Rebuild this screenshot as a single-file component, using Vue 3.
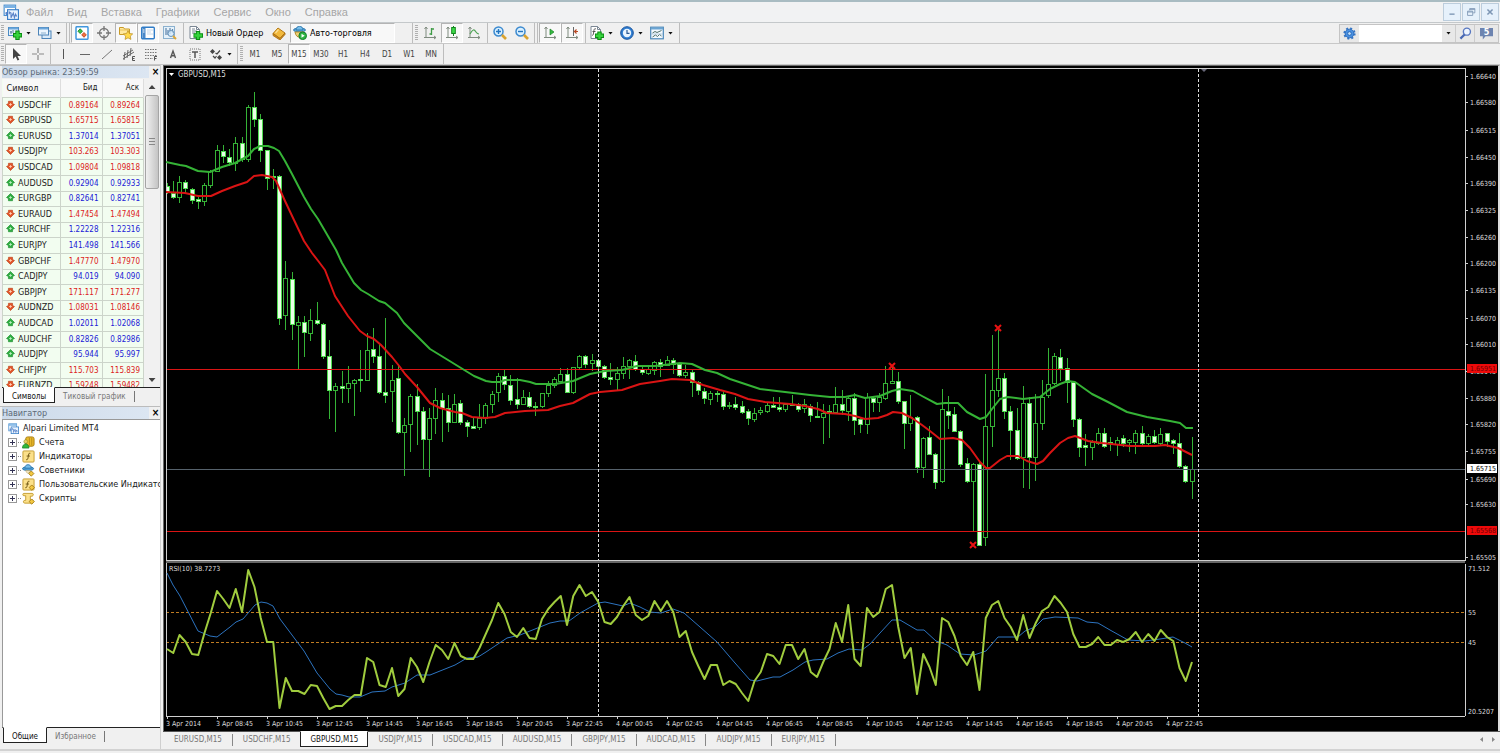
<script setup>
import { ref } from 'vue'

const menu = ['Файл', 'Вид', 'Вставка', 'Графики', 'Сервис', 'Окно', 'Справка']

// Icon bodies, drawn on a 14 x 14 grid
const icons = {
  app: '<rect x="1" y="1" width="10" height="9" fill="#fff" stroke="#4a90d0"/><path d="M1 2.500h10" stroke="#7ab2e4" stroke-width="2"/><rect x="4" y="5" width="9.500" height="8.500" fill="#eaf4ff" stroke="#3a7fc8"/><path d="M5.500 9v-2l1.500 1v4l2-4 1 4 1-3 1 2" fill="none" stroke="#5b83c8"/><path d="M3 7v3M2 8h2" stroke="#5b83c8"/>',
  newChart: '<rect x=".5" y="1.500" width="10" height="8" fill="#e6f1fb" stroke="#4d8cc4"/><path d="M1 2.500h9" stroke="#6aa7dc" stroke-width="2"/><path d="M3 5v3M2 6h2M5 4v3" stroke="#5a7fa0"/><path d="M9.500 4.500v9.500M5 9.200h9" stroke="#0a8a12" stroke-width="4.400"/><path d="M9.500 5.500v7.500M6 9.200h7.200" stroke="#35d33c" stroke-width="2.400"/>',
  profiles: '<rect x="4" y="5" width="9" height="7.500" fill="#d8e9f8" stroke="#4d84b8"/><rect x=".5" y="1.500" width="10" height="7.500" fill="#eaf4fd" stroke="#4d84b8"/><path d="M1 2.500h9" stroke="#6aa7dc" stroke-width="2"/><path d="M3 7h5" stroke="#8ab0cf"/>',
  market: '<rect x="1" y=".7" width="12" height="12.600" rx="1" fill="#fff" stroke="#3f96de" stroke-width="1.500"/><path d="M5.200 2.800l2.300 2.400-2.300 2.400-2.300-2.400z" fill="#3cc24c" stroke="#0a7b1a" stroke-width=".8"/><path d="M9 6.500l2.300 2.400-2.300 2.400-2.300-2.400z" fill="#f0703c" stroke="#b8330d" stroke-width=".8"/>',
  cross: '<circle cx="7" cy="7" r="4.500" fill="none" stroke="#777" stroke-width="1.300"/><path d="M7 0v5M7 9v5M0 7h5M9 7h5" stroke="#777" stroke-width="1.300"/>',
  navigator: '<path d="M.5 8.500v-7h4l1 1.500h5v5.500z" fill="#ffe9a0" stroke="#c89a26"/><path d="M1 4h9" stroke="#e8c35a"/><path d="M9 4.500l1.400 3 3.300.400-2.400 2.200.6 3.300-2.900-1.600-2.900 1.600.6-3.300-2.400-2.200 3.300-.400z" fill="#ffd94a" stroke="#c2952a" stroke-width=".8"/>',
  terminal: '<rect x=".7" y="1.200" width="12.600" height="11.600" rx="1" fill="#fff" stroke="#2f7cc8" stroke-width="1.400"/><rect x="1.500" y="2" width="3" height="10" fill="#4a88c8"/><path d="M6 4h6M6 6h4M6 8h6" stroke="#c6d8ea"/><path d="M2 4h1.500M2 6h1.500" stroke="#fff"/>',
  tester: '<rect x=".5" y=".5" width="11" height="12" fill="#e5f1fa" stroke="#8bb1cf"/><path d="M3 2v7M5 4v5M7 2v6M9.500 3v4" stroke="#5d84ab" stroke-width="1.200"/><circle cx="8" cy="7.500" r="3" fill="#d6ebfb" fill-opacity=".8" stroke="#6794bb"/><path d="M10 10l3 3" stroke="#dca737" stroke-width="2"/>',
  order: '<path d="M1 .5h6.500l3 3v9h-9.500z" fill="#fff" stroke="#7b8794"/><path d="M7.500.5v3h3M3 3h3M3 5h5M3 7h3" stroke="#7b8794" fill="none"/><path d="M9 5v9M4.500 9.500h9.500" stroke="#0a8a12" stroke-width="4.400"/><path d="M9 6v7M5.300 9.500h7.800" stroke="#35d33c" stroke-width="2.400"/>',
  book: '<path d="M1 7.500l5-5.500 7 5-5 5.500z" fill="#f2b93c" stroke="#b57a14"/><path d="M1 7.500v2l7 4.500 5-5.500v-1.500l-5 5.500z" fill="#d18d1c" stroke="#a66c10" stroke-width=".8"/><path d="M3.500 7l3-3.500" stroke="#ffe194" stroke-width="1.200"/>',
  expert: '<ellipse cx="6.500" cy="4" rx="6" ry="2" fill="#5ba9dc" stroke="#2d78ae"/><path d="M3 4c0-5 7-5 7 0z" fill="#76bdea" stroke="#2d78ae"/><path d="M2 6c1 7 8 7 9 0z" fill="#ecd27a" stroke="#b58c2a"/><circle cx="9.700" cy="9.800" r="3.800" fill="#2eb443" stroke="#15802a"/><path d="M8.500 7.800l3.200 2-3.200 2z" fill="#fff"/>',
  bars: '<path d="M3 1v11M1 11.500h12M3 1l-1.500 2M3 1l1.500 2M13 11.500l-2-1.500M13 11.500l-2 1.500" stroke="#7f8b7f" fill="none"/><path d="M8.500 2v7M8.500 3h2.500M6.500 8h2" stroke="#3f9b46" stroke-width="1.300"/>',
  candle: '<path d="M3 1v11M1 11.500h12M3 1l-1.500 2M3 1l1.500 2M13 11.500l-2-1.500M13 11.500l-2 1.500" stroke="#7f8b7f" fill="none"/><path d="M8.500 0v10" stroke="#14861e"/><rect x="6.700" y="1.500" width="3.600" height="6" fill="#3ddb48" stroke="#14861e"/>',
  line: '<path d="M3 1v11M1 11.500h12M3 1l-1.500 2M3 1l1.500 2M13 11.500l-2-1.500M13 11.500l-2 1.500" stroke="#7f8b7f" fill="none"/><path d="M3 8c3-5 4-5 6-2 1 1.500 2 2 3 2" fill="none" stroke="#4fa456" stroke-width="1.200"/>',
  zoomIn: '<circle cx="5.500" cy="5.500" r="4.500" fill="#d9f0ff" stroke="#3b89cf" stroke-width="1.500"/><path d="M3 5.500h5M5.500 3v5" stroke="#2375c0" stroke-width="1.400"/><path d="M9 9l4 4" stroke="#d9a32f" stroke-width="2.600"/>',
  zoomOut: '<circle cx="5.500" cy="5.500" r="4.500" fill="#d9f0ff" stroke="#3b89cf" stroke-width="1.500"/><path d="M3 5.500h5" stroke="#2375c0" stroke-width="1.400"/><path d="M9 9l4 4" stroke="#d9a32f" stroke-width="2.600"/>',
  scroll: '<path d="M3 1v11M1 11.500h12M3 1l-1.500 2M3 1l1.500 2M13 11.500l-2-1.500M13 11.500l-2 1.500" stroke="#7f8b7f" fill="none"/><path d="M7 3l4 3-4 3z" fill="#35bb40" stroke="#1b8226" stroke-width=".7"/>',
  shift: '<path d="M3 1v11M1 11.500h12M3 1l-1.500 2M3 1l1.500 2M13 11.500l-2-1.500M13 11.500l-2 1.500" stroke="#7f8b7f" fill="none"/><path d="M8.500 1v9" stroke="#666"/><path d="M13 5.500h-3M11.500 3.500l-2 2 2 2" fill="none" stroke="#bb4a24" stroke-width="1.200"/>',
  indicator: '<path d="M1 .5h6.500l3 3v9h-9.500z" fill="#fff" stroke="#7b8794"/><path d="M7.500.5v3h3" stroke="#7b8794" fill="none"/><path d="M6 3c-2-1-2 1-2.300 3s-.5 4-1.700 3M2.500 5.500h3" fill="none" stroke="#555"/><path d="M9.500 5.500v8.500M5 9.800h9" stroke="#0a8a12" stroke-width="4.400"/><path d="M9.500 6.500v6.500M5.800 9.800h7.400" stroke="#35d33c" stroke-width="2.400"/>',
  clock: '<circle cx="7" cy="7" r="6.300" fill="#2f7dd1" stroke="#1b559d"/><circle cx="7" cy="7" r="4.200" fill="#eaf5ff"/><path d="M7 4v3.300h2.500" fill="none" stroke="#2a5a94" stroke-width="1.200"/>',
  template: '<rect x=".7" y="1.200" width="12.600" height="11.600" fill="#f4faff" stroke="#4a87b8" stroke-width="1.200"/><path d="M1 2.500h12" stroke="#6ba5d3" stroke-width="2"/><path d="M2.500 7l2.500-1.500 2 1 4.500-2M2.500 11l3-2 2 1.500 2-2 2 1.500" fill="none" stroke="#4f6f68"/><path d="M1 8h12" stroke="#9dbad0" stroke-width=".7"/>',
  cursor: '<path d="M4 1v11l2.700-2.500 1.800 4 1.800-.8-1.800-3.800h3.500z" fill="#444"/>',
  crosshair: '<path d="M7 1v5M7 8v5M1 7h5M8 7h5" stroke="#888" stroke-width="1.200"/>',
  vline: '<path d="M7.500 2v10" stroke="#555"/>',
  hline: '<path d="M2 7.500h10" stroke="#666"/>',
  trend: '<path d="M2 12L12 3" stroke="#777"/>',
  channel: '<path d="M1 9l10-6M1 12l11-7M3 5l-1 8M6 3l-1 8M9 1l-1 8" stroke="#666"/><path d="M13 9.500h-2.500v4h2.500M10.500 11.500h2" stroke="#555" fill="none"/>',
  fibo: '<path d="M1 2.500h12M1 5.500h12M1 8.500h12M1 11.500h8" stroke="#777" stroke-dasharray="1.500 1"/><path d="M13 9.500h-2.500v4M10.500 11.500h2" stroke="#555" fill="none"/>',
  letter: '<path d="M4.500 11l2.500-7 2.500 7M5.300 8.800h3.400" fill="none" stroke="#555" stroke-width="1.400"/>',
  label: '<rect x="2" y="2" width="10" height="11" fill="none" stroke="#777" stroke-dasharray="1 1"/><path d="M4 5h6M7 5v6" stroke="#555" stroke-width="1.500"/>',
  arrows: '<path d="M3.500 2l2.500 2.500-2.500 2.500-2.500-2.500z" fill="#444"/><path d="M10.500 8l2.500 2.500-2.500 2.500-2.500-2.500z" fill="#444"/><path d="M4 9l2 2 1.500-2M6.500 6l1.500 1 3-3.500" fill="none" stroke="#444" stroke-width="1.200"/>',
  gear: '<circle cx="7" cy="7" r="4.700" fill="#4b91e2" stroke="#2264b4"/><circle cx="7" cy="7" r="5.600" fill="none" stroke="#3474c4" stroke-width="2" stroke-dasharray="2.200 2.200"/><circle cx="7" cy="7" r="2" fill="#c5e0fb" stroke="#2264b4"/>',
  search: '<circle cx="8.500" cy="5" r="3.800" fill="#eef5ff" stroke="#5877c0" stroke-width="1.500"/><path d="M6 8l-4.500 4.500" stroke="#4a69b4" stroke-width="2.400"/>',
  chat: '<path d="M0 1h14v9h-8l-3 3.500v-3.500h-3z" fill="#6d84b0"/>',
  min: '<path d="M4 9.500h6" stroke="#7d96b4" stroke-width="1.600"/>',
  restore: '<path d="M5.500 5v-2h6v5h-2M3 6h6v5h-6zM3 7h6M5.500 4h6" fill="none" stroke="#7d96b4"/>',
  close: '<path d="M4 4l6 6M10 4l-6 6" stroke="#7d96b4" stroke-width="1.800"/>',
  accounts: '<rect x="4" y="1" width="9" height="10" rx="2" fill="#e9b92b" stroke="#a67a10"/><path d="M8 2v8M10.500 2v8" stroke="#b88b18"/><circle cx="4" cy="6" r="2" fill="#e8cf6a" stroke="#8c8b22" stroke-width=".6"/><path d="M.5 13c0-6 7-6 7 0z" fill="#31b83c" stroke="#178224" stroke-width=".8"/>',
  func: '<rect x="1" y="1" width="12" height="12" rx="1" fill="#fbe08a" stroke="#c39a2e"/><path d="M9 3.500c-2-.7-1.800 1.500-2.200 3.500s-.500 4-2.300 3.500M5 6.500h3.500" fill="none" stroke="#6b5210"/>',
  advisor: '<ellipse cx="6.500" cy="5" rx="6" ry="2" fill="#4f9fd6" stroke="#2d78ae"/><path d="M3 4.500c0-5 7-5 7 0z" fill="#76bdea" stroke="#2d78ae"/><path d="M4 7c1 4 4 4 5 0z" fill="#efe3bf" stroke="#b9a468" stroke-width=".6"/><path d="M10 7.500l2.800 2.800-2.800 2.800-2.800-2.800z" fill="#f3c840" stroke="#a67d16"/>',
  custom: '<rect x="1" y="1" width="12" height="12" rx="1" fill="#fbe08a" stroke="#c39a2e"/><path d="M8 3.500c-2-.7-1.800 1.500-2.200 3.500s-.500 4-2.300 3.500M4 6.500h3.500" fill="none" stroke="#6b5210"/><path d="M10.500 7.500l2.800 2.800-2.800 2.800-2.800-2.800z" fill="#f3c840" stroke="#a67d16"/>',
  script: '<path d="M2 1.500h9c2 0 1 3 0 3h-2v5h2v2.500h-8c-2 0-2-3 0-3h1v-5h-2c-1.500 0-1.500-2.500 0-2.500z" fill="#fbe08a" stroke="#c39a2e"/><path d="M10.500 7.500l2.800 2.800-2.800 2.800-2.800-2.800z" fill="#f3c840" stroke="#a67d16"/>',
  up: '<path d="M7 .8l6.200 6.200-3 1.500v3.500h-6.400v-3.500l-3-1.500z" fill="#2fae42" stroke="#1c8a2e"/><path d="M7 5v4M5 7h4" stroke="#b9ecc0" stroke-width="1.600"/>',
  down: '<path d="M7 13.200l6.200-6.200-3-1.500v-3.500h-6.400v3.500l-3 1.500z" fill="#e2562b" stroke="#bb4018"/><path d="M7 5v4M5 7h4" stroke="#ffd0b4" stroke-width="1.600"/>'
}

const groupA = [
  { icon: 'market', label: 'Обзор рынка', on: true },
  { icon: 'cross', label: 'Окно данных' },
  { icon: 'navigator', label: 'Навигатор', on: true },
  { icon: 'terminal', label: 'Терминал', on: true },
  { icon: 'tester', label: 'Тестер стратегий' }
]
const chartTypes = [
  { icon: 'bars', label: 'Бары' },
  { icon: 'candle', label: 'Свечи', on: true },
  { icon: 'line', label: 'Линия' }
]
const lineTools = ['vline', 'hline', 'trend', 'channel', 'fibo', 'letter', 'label']
const frames = ['M1', 'M5', 'M15', 'M30', 'H1', 'H4', 'D1', 'W1', 'MN']
const query = ref('')

const quotes = [
  ['USDCHF', '0.89164', '0.89264', 0], ['GBPUSD', '1.65715', '1.65815', 0],
  ['EURUSD', '1.37014', '1.37051', 1], ['USDJPY', '103.263', '103.303', 0],
  ['USDCAD', '1.09804', '1.09818', 0], ['AUDUSD', '0.92904', '0.92933', 1],
  ['EURGBP', '0.82641', '0.82741', 1], ['EURAUD', '1.47454', '1.47494', 0],
  ['EURCHF', '1.22228', '1.22316', 1], ['EURJPY', '141.498', '141.566', 1],
  ['GBPCHF', '1.47770', '1.47970', 0], ['CADJPY', '94.019', '94.090', 1],
  ['GBPJPY', '171.117', '171.277', 0], ['AUDNZD', '1.08031', '1.08146', 0],
  ['AUDCAD', '1.02011', '1.02068', 1], ['AUDCHF', '0.82826', '0.82986', 1],
  ['AUDJPY', '95.944', '95.997', 1], ['CHFJPY', '115.703', '115.839', 0],
  ['EURNZD', '1.59248', '1.59482', 0]
]

const tree = [
  ['accounts', 'Счета'], ['func', 'Индикаторы'], ['advisor', 'Советники'],
  ['custom', 'Пользовательские Индикато'], ['script', 'Скрипты']
]

const tabs = ['EURUSD,M15', 'USDCHF,M15', 'GBPUSD,M15', 'USDJPY,M15', 'USDCAD,M15', 'AUDUSD,M15', 'GBPJPY,M15', 'AUDCAD,M15', 'AUDJPY,M15', 'EURJPY,M15']

// One bar every 6.25 units: high, body top, body bottom, low, hollow flag
const STEP = 6.25
const ohlc = `183 186 192 193 0|181 193 197 198 0|176 182 197 202 1|180 182 188 193 0|188 189 200 203 0|197 199 201 208 0|183 185 201 205 1|170 171 185 187 1|145 150 171 171 1|145 151 156 162 0|149 157 162 165 0|137 143 163 170 1|137 143 159 161 0|105 107 159 161 1|92 107 119 126 0|114 119 150 161 0|150 150 178 189 0|169 176 177 188 0|175 176 318 324 0|261 278 315 329 1|272 279 324 339 0|316 322 325 369 1|316 322 332 356 0|309 320 333 340 1|302 320 323 324 0|323 324 356 358 0|340 356 390 418 0|383 386 390 431 1|371 386 388 402 0|366 383 388 402 1|379 380 383 415 1|350 379 380 391 0|333 350 380 380 1|328 349 356 362 0|343 356 392 393 0|318 392 395 402 0|365 380 391 421 1|364 378 432 433 0|418 425 432 475 1|394 396 424 451 1|384 396 411 444 0|407 411 439 468 0|408 418 439 476 1|388 400 418 433 1|393 400 408 441 0|395 408 422 431 0|394 404 422 422 1|400 403 422 424 0|420 422 426 436 0|417 426 428 428 0|404 418 427 429 1|403 405 418 423 1|391 394 404 412 1|373 376 392 401 1|370 376 384 389 0|375 385 400 404 0|378 399 404 408 0|390 397 404 404 1|392 397 406 407 0|402 406 407 415 0|393 393 406 407 1|381 385 393 396 1|377 379 385 387 1|368 374 381 381 1|368 374 392 392 0|367 367 392 393 1|355 356 367 368 1|355 356 364 367 0|354 360 363 370 1|359 360 366 373 0|365 366 377 378 0|363 377 379 384 0|367 373 379 390 1|357 366 373 378 1|359 360 366 378 1|355 361 369 370 0|367 369 372 374 0|367 369 373 374 1|361 362 370 374 1|359 362 366 376 0|356 360 365 365 1|358 360 364 373 0|363 364 375 376 0|365 372 375 377 1|369 372 382 396 0|381 382 390 394 0|388 391 398 403 0|391 393 399 404 1|391 393 394 401 0|392 394 406 409 0|402 405 406 408 1|397 404 407 409 0|401 406 412 413 0|409 411 418 424 0|408 413 419 421 1|407 410 412 414 1|402 405 411 412 1|397 405 407 407 0|397 407 409 411 0|403 404 409 411 1|395 404 405 405 0|403 404 409 411 0|399 404 408 412 1|404 406 415 421 0|402 416 417 417 0|404 413 417 443 1|405 411 412 437 0|387 404 412 413 1|390 404 410 414 0|396 398 411 420 1|393 398 420 434 0|417 419 424 432 0|393 397 424 433 1|397 398 402 411 0|393 397 402 411 1|366 383 398 399 1|367 381 383 383 1|372 381 401 403 0|401 401 423 448 0|395 417 423 430 1|416 417 467 472 0|437 438 467 477 1|426 437 454 454 0|453 454 482 488 0|389 409 481 482 1|396 411 415 428 0|407 414 431 431 0|430 431 464 466 0|458 463 481 482 0|463 464 481 530 1|462 464 545 545 0|374 426 537 545 1|335 390 426 446 1|330 378 390 396 1|373 378 411 418 0|406 411 430 459 0|408 430 458 459 0|386 403 457 487 1|397 403 457 488 0|394 423 457 480 1|380 397 423 429 1|348 384 395 397 1|353 356 383 384 1|349 357 368 380 0|358 368 382 402 0|381 382 419 426 0|418 419 447 456 0|434 445 447 465 0|440 442 447 459 1|428 433 443 444 1|428 433 446 447 0|437 442 443 450 0|437 440 444 455 1|435 438 443 446 0|439 440 442 451 1|430 433 442 453 1|426 433 443 444 0|434 436 443 444 1|430 436 442 443 0|428 434 443 444 1|433 433 441 446 0|439 440 443 453 0|433 443 466 467 0|465 466 481 482 0|437 469 481 498 1`
const barX = i => Math.floor(167 + i * STEP)
const candles = ohlc.split('|').map((row, i) => {
  const [high, top, bottom, low, hollow] = row.split(' ').map(Number)
  return { x: barX(i), high, top, bottom, low, hollow, h: Math.max(bottom - top, 1) }
})

const rsi = [649, 653, 635, 642, 654, 655, 633, 613, 591, 599, 608, 589, 612, 570, 587, 618, 642, 642, 708, 678, 691, 691, 694, 685, 686, 698, 709, 706, 706, 700, 695, 695, 658, 662, 685, 687, 668, 696, 689, 658, 667, 682, 662, 645, 650, 659, 643, 656, 659, 659, 648, 634, 620, 603, 614, 632, 637, 628, 638, 639, 619, 609, 602, 596, 625, 596, 585, 596, 592, 602, 622, 624, 617, 606, 597, 615, 620, 616, 601, 611, 601, 612, 637, 631, 652, 666, 679, 665, 665, 685, 681, 684, 693, 701, 681, 672, 654, 656, 664, 645, 645, 659, 649, 672, 677, 662, 649, 623, 642, 605, 659, 666, 608, 617, 612, 589, 585, 627, 658, 648, 694, 654, 667, 685, 618, 622, 636, 656, 665, 652, 690, 618, 605, 601, 618, 627, 640, 615, 638, 623, 611, 607, 596, 603, 612, 634, 647, 647, 644, 637, 645, 645, 640, 642, 639, 632, 642, 634, 641, 630, 637, 641, 668, 681, 662]
const rsiPoints = rsi.map((y, i) => `${167 + i * STEP},${y}`).join(' ')
const rsiAverage = '167,573 173,585 180,596 198,631 210,636 217,637 230,627 236,622 243,619 255,605 261,602 267,603 273,606 280,619 304,651 317,673 330,689 336,694 342,695 349,697 360,697 372,692 385,691 392,687 405,683 417,675 430,675 445,669 455,665 467,658 478,657 486,652 507,638 520,635 535,629 550,623 560,621 569,621 580,613 598,603 605,602 623,606 630,603 640,607 650,612 661,613 667,611 673,609 684,613 700,627 717,642 735,663 750,680 757,681 773,677 780,677 793,670 805,662 813,660 827,659 838,653 849,649 862,650 870,644 880,633 892,620 900,620 917,630 924,630 936,641 947,645 960,654 974,655 986,651 998,637 1018,637 1025,631 1035,627 1043,619 1055,617 1078,618 1087,622 1098,623 1110,630 1128,640 1145,641 1160,639 1173,637 1185,643 1192,647'
const slow = '166,162 180,165 186,166 198,171 210,172 222,167 235,163 248,156 254,149 260,146 268,146 274,148 279,151 285,161 292,174 304,197 311,209 318,219 325,231 336,250 342,263 354,283 361,290 368,294 379,301 385,303 397,313 404,323 418,337 430,349 448,360 461,368 474,376 486,381 492,382 500,382 505,380 520,380 530,382 536,384 555,384 573,381 590,374 605,371 622,370 637,366 655,366 672,364 680,363 692,364 705,370 717,373 730,379 745,384 760,389 785,392 810,395 830,397 845,397 855,395 865,398 880,396 892,391 900,389 913,391 922,396 937,404 945,403 958,403 967,412 980,419 986,417 992,409 1000,399 1008,397 1023,399 1040,397 1050,389 1060,384 1068,381 1075,382 1092,394 1108,402 1127,412 1147,417 1170,421 1180,423 1186,428 1193,428'
const fast = '166,192 185,193 198,196 211,196 222,191 235,186 247,182 254,176 262,175 272,177 276,181 285,201 294,220 304,241 312,253 319,262 325,270 335,296 348,316 360,331 367,336 374,339 381,345 392,357 400,367 405,374 417,387 430,403 440,408 455,412 462,413 472,417 485,418 495,417 505,413 525,411 548,410 560,406 573,403 590,394 600,392 622,390 640,384 660,381 672,379 690,380 703,385 720,390 735,394 748,399 765,402 790,404 805,406 818,409 827,413 845,414 855,416 865,419 878,418 887,415 893,412 902,413 912,418 922,425 930,431 940,439 953,438 962,440 970,448 980,462 986,468 990,468 1000,460 1007,456 1018,456 1027,461 1037,464 1043,461 1050,453 1060,443 1068,438 1075,436 1088,441 1102,443 1130,446 1155,446 1165,445 1178,448 1192,455'
const crosses = [[892, 366], [998, 328], [973, 545]]

const times = ['3 Apr 2014', '3 Apr 08:45', '3 Apr 10:45', '3 Apr 12:45', '3 Apr 14:45', '3 Apr 16:45', '3 Apr 18:45', '3 Apr 20:45', '3 Apr 22:45', '4 Apr 00:45', '4 Apr 02:45', '4 Apr 04:45', '4 Apr 06:45', '4 Apr 08:45', '4 Apr 10:45', '4 Apr 12:45', '4 Apr 14:45', '4 Apr 16:45', '4 Apr 18:45', '4 Apr 20:45', '4 Apr 22:45']
const prices = [['1.66640', 76], ['1.66580', 102], ['1.66515', 130], ['1.66450', 157], ['1.66390', 183], ['1.66325', 210], ['1.66260', 237], ['1.66200', 263], ['1.66135', 290], ['1.66070', 318], ['1.66010', 344], ['1.65945', 371], ['1.65880', 398], ['1.65820', 424], ['1.65755', 451], ['1.65690', 479], ['1.65630', 504], ['1.65505', 557]]
const marks = [['1.65951', 369, 'alert'], ['1.65715', 469, 'bid'], ['1.65568', 531, 'alert']]
const levels = [['71.512', 568], ['55', 612], ['45', 642], ['20.5207', 711]]
</script>

<template>
  <div class="terminal">
    <header class="menubar">
      <svg class="logo" viewBox="0 0 14 14" v-html="icons.app"></svg>
      <nav class="menu">
        <button v-for="m in menu" :key="m" type="button">{{ m }}</button>
      </nav>
      <div class="winctl">
        <button v-for="w in ['min', 'restore', 'close']" :key="w" type="button" :aria-label="w">
          <svg viewBox="0 0 14 14" v-html="icons[w]"></svg>
        </button>
      </div>
    </header>

    <div class="toolbar">
      <i class="grip"></i>
      <button type="button" class="tool drop" aria-label="Новый график"><svg viewBox="0 0 14 14" v-html="icons.newChart"></svg><i class="caret"></i></button>
      <button type="button" class="tool drop" aria-label="Профили"><svg viewBox="0 0 14 14" v-html="icons.profiles"></svg><i class="caret"></i></button>
      <i class="sep double"></i>
      <button v-for="t in groupA" :key="t.icon" type="button" class="tool" :class="{ on: t.on }" :aria-label="t.label"><svg viewBox="0 0 14 14" v-html="icons[t.icon]"></svg></button>
      <i class="sep"></i>
      <button type="button" class="tool wide order"><svg viewBox="0 0 14 14" v-html="icons.order"></svg>Новый Ордер</button>
      <button type="button" class="tool" aria-label="Редактор"><svg viewBox="0 0 14 14" v-html="icons.book"></svg></button>
      <button type="button" class="tool wide auto on"><svg viewBox="0 0 14 14" v-html="icons.expert"></svg>Авто-торговля</button>
      <i class="sep far"></i>
      <i class="grip"></i>
      <button v-for="t in chartTypes" :key="t.icon" type="button" class="tool" :class="{ on: t.on }" :aria-label="t.label"><svg viewBox="0 0 14 14" v-html="icons[t.icon]"></svg></button>
      <i class="sep"></i>
      <button type="button" class="tool" aria-label="Увеличить"><svg viewBox="0 0 14 14" v-html="icons.zoomIn"></svg></button>
      <button type="button" class="tool" aria-label="Уменьшить"><svg viewBox="0 0 14 14" v-html="icons.zoomOut"></svg></button>
      <i class="sep double"></i>
      <button type="button" class="tool on" aria-label="Автопрокрутка"><svg viewBox="0 0 14 14" v-html="icons.scroll"></svg></button>
      <button type="button" class="tool on" aria-label="Сдвиг графика"><svg viewBox="0 0 14 14" v-html="icons.shift"></svg></button>
      <i class="sep"></i>
      <button v-for="d in ['indicator', 'clock', 'template']" :key="d" type="button" class="tool drop" :aria-label="d"><svg viewBox="0 0 14 14" v-html="icons[d]"></svg><i class="caret"></i></button>
      <i class="sep"></i>
      <div class="finder">
        <button type="button" aria-label="Настройки"><svg viewBox="0 0 14 14" v-html="icons.gear"></svg></button>
        <input v-model="query" type="text" aria-label="Поиск">
        <button type="button" class="narrow" aria-label="История поиска"><i class="caret"></i></button>
        <button type="button" aria-label="Найти"><svg viewBox="0 0 14 14" v-html="icons.search"></svg></button>
        <button type="button" class="chat" aria-label="Сообщения"><svg viewBox="0 0 14 14" v-html="icons.chat"></svg><b>5</b></button>
      </div>
    </div>

    <div class="toolbar second">
      <i class="grip"></i>
      <button type="button" class="tool on" aria-label="Курсор"><svg viewBox="0 0 14 14" v-html="icons.cursor"></svg></button>
      <button type="button" class="tool" aria-label="Перекрестие"><svg viewBox="0 0 14 14" v-html="icons.crosshair"></svg></button>
      <i class="sep"></i>
      <button v-for="t in lineTools" :key="t" type="button" class="tool" :aria-label="t"><svg viewBox="0 0 14 14" v-html="icons[t]"></svg></button>
      <button type="button" class="tool drop" aria-label="Стрелки"><svg viewBox="0 0 14 14" v-html="icons.arrows"></svg><i class="caret"></i></button>
      <i class="sep"></i>
      <i class="grip"></i>
      <button v-for="f in frames" :key="f" type="button" class="tool frame" :class="{ on: f === 'M15' }">{{ f }}</button>
      <i class="sep"></i>
    </div>

    <div class="workspace">
      <aside class="side">
        <section class="panel watch">
          <h2>Обзор рынка: 23:59:59<button type="button" aria-label="Закрыть">×</button></h2>
          <div class="list">
            <table>
              <thead><tr><th>Символ</th><th>Бид</th><th>Аск</th></tr></thead>
              <tbody>
                <tr v-for="q in quotes" :key="q[0]" :class="q[3] ? 'rise' : 'fall'">
                  <td><svg viewBox="0 0 14 14" v-html="q[3] ? icons.up : icons.down"></svg>{{ q[0] }}</td>
                  <td>{{ q[1] }}</td>
                  <td>{{ q[2] }}</td>
                </tr>
              </tbody>
            </table>
            <div class="scroll">
              <i class="tri up"></i>
              <i class="thumb"></i>
              <i class="tri down"></i>
            </div>
          </div>
          <div class="tabrow"><button type="button" class="active">Символы</button><button type="button">Тиковый график</button></div>
        </section>

        <section class="panel nav">
          <h2>Навигатор<button type="button" aria-label="Закрыть">×</button></h2>
          <ul class="tree">
            <li class="root"><svg viewBox="0 0 14 14" v-html="icons.app"></svg>Alpari Limited MT4</li>
            <li v-for="n in tree" :key="n[0]"><i class="plus"></i><svg viewBox="0 0 14 14" v-html="icons[n[0]]"></svg>{{ n[1] }}</li>
          </ul>
          <div class="tabrow"><button type="button" class="active">Общие</button><button type="button">Избранное</button></div>
        </section>
      </aside>

      <main class="main">
        <div class="chart">
          <svg class="plot" height="664">
            <g transform="translate(-166 -67)" shape-rendering="crispEdges">
              <g class="candles">
                <template v-for="c in candles" :key="c.x">
                  <rect class="wick" :x="c.x" :y="c.high" width="1" :height="c.low - c.high + 1" />
                  <rect :class="c.hollow ? 'hollow' : 'solid'" :x="c.x - 1.5" :y="c.top + 0.5" width="4" :height="c.h" />
                </template>
              </g>
            </g>
            <g shape-rendering="crispEdges">
              <rect class="limit" x="0" y="302" width="100%" height="1" />
              <rect class="limit" x="0" y="464" width="100%" height="1" />
              <line class="bidline" x1="0" x2="100%" y1="402.5" y2="402.5" />
              <line class="level" x1="0" x2="100%" y1="545.5" y2="545.5" />
              <line class="level" x1="0" x2="100%" y1="575.5" y2="575.5" />
              <line class="day" x1="432.5" x2="432.5" y1="2" y2="649" />
              <line class="day" x1="1032.5" x2="1032.5" y1="2" y2="649" />
              <line class="edge" x1="0" x2="100%" y1="1" y2="1" />
              <line class="edge" x1="0.5" x2="0.5" y1="1" y2="649" />
              <line class="edge" x1="0" x2="100%" y1="493.5" y2="493.5" />
              <line class="split" x1="0" x2="100%" y1="495" y2="495" />
              <line class="edge" x1="0" x2="100%" y1="649.5" y2="649.5" />
              <line v-for="(t, i) in times" :key="t" class="edge" :x1="1.5 + i * 50" :x2="1.5 + i * 50" y1="650" y2="652" />
            </g>
            <g transform="translate(-166 -67)">
              <polyline class="slow" :points="slow" />
              <polyline class="fast" :points="fast" />
              <path v-for="c in crosses" :key="c[0]" class="cross" :d="`M${c[0] - 3} ${c[1] - 3}l6 6m0-6l-6 6`" />
              <polyline class="average" :points="rsiAverage" />
              <polyline class="rsi" :points="rsiPoints" />
            </g>
            <path class="white" d="M3 6h5l-2.500 3z" />
            <path class="shiftmark" d="M1035 2h6l-3 3z" />
            <text x="12" y="10" class="title">GBPUSD,M15</text>
            <text x="3" y="504">RSI(10) 38.7273</text>
            <text v-for="(t, i) in times" :key="t" :x="i * 50" y="659">{{ t }}</text>
          </svg>
          <svg class="axis" height="664">
            <g transform="translate(0 -67)">
              <path class="edge" d="M.5 68v493M.5 564v152" />
              <g v-for="p in prices" :key="p[0]">
                <path class="edge" :d="`M0 ${p[1] + 0.5}h3`" />
                <text x="5" :y="p[1] + 3">{{ p[0] }}</text>
              </g>
              <text v-for="l in levels" :key="l[0]" x="3" :y="l[1] + 3">{{ l[0] }}</text>
              <g v-for="m in marks" :key="m[0]" :class="m[2]">
                <rect x="2" :y="m[1] - 5" width="30" height="9" />
                <text x="5" :y="m[1] + 2">{{ m[0] }}</text>
              </g>
            </g>
          </svg>
        </div>
        <div class="charttabs">
          <button v-for="t in tabs" :key="t" type="button" :class="{ active: t === 'GBPUSD,M15' }">{{ t }}</button>
          <span class="pager"><i class="left"></i><i class="right"></i></span>
        </div>
      </main>
    </div>
    <footer class="status"></footer>
  </div>
</template>

<style>
body {
  background: #f0f0f0;
}
</style>

<style scoped>
* {
  box-sizing: border-box;
}
.terminal {
  display: flex;
  flex-direction: column;
  min-height: 100vh;
  overflow: hidden;
  border-top: 2px solid #a9bcc2;
  background: #f0f0f0;
  color: #1a1a1a;
  font-family: "DejaVu Sans Condensed", "DejaVu Sans", sans-serif;
  font-size: 9px;
  line-height: 12px;
}
button {
  margin: 0;
  padding: 0;
  border: 0;
  background: none;
  color: inherit;
  font: inherit;
}
svg {
  flex: none;
}
.menubar {
  display: flex;
  align-items: center;
  height: 21px;
  padding-left: 3px;
  border-bottom: 1px solid #c4c8ca;
  background: #f1f2f3;
}
.logo {
  width: 16px;
  height: 16px;
}
.menu {
  display: flex;
  gap: 14px;
  margin-left: 7px;
  color: #a6a6a6;
  font-family: "Liberation Sans", sans-serif;
  font-size: 11px;
}
.winctl {
  display: flex;
  gap: 1px;
  margin-left: auto;
  padding-right: 1px;
}
.winctl button {
  display: flex;
  align-items: center;
  justify-content: center;
  width: 18px;
  height: 18px;
  border: 1px solid #bccddc;
  background: #e6f1fb;
}
.winctl svg {
  width: 12px;
  height: 12px;
}
.toolbar {
  display: flex;
  align-items: center;
  height: 21px;
  border-bottom: 1px solid #c8c8c8;
}
.grip {
  flex: none;
  width: 3px;
  height: 16px;
  margin: 0 1px;
  background: repeating-linear-gradient(#b0b0b0 0 1px, #f0f0f0 1px 2px);
}
.tool {
  display: flex;
  flex: none;
  align-items: center;
  justify-content: center;
  width: 22px;
  height: 20px;
}
.tool svg {
  width: 14px;
  height: 14px;
}
.tool.on {
  border: 1px solid #b4b4b4;
  border-right-color: #fff;
  border-bottom-color: #fff;
  background: #f8f8f8;
}
.tool.drop {
  justify-content: flex-start;
  gap: 4px;
  width: 30px;
  padding-left: 3px;
}
.tool.wide {
  justify-content: flex-start;
  gap: 3px;
  width: auto;
  color: #000;
}
.tool.order {
  width: 83px;
  padding-left: 4px;
}
.tool.auto {
  width: 105px;
  padding-left: 2px;
}
.tool.frame {
  padding-top: 2px;
  color: #444;
  font-size: 8px;
}
.caret {
  width: 5px;
  height: 3px;
  background: #111;
  clip-path: polygon(0 0, 100% 0, 50% 100%);
}
.sep {
  flex: none;
  width: 1px;
  height: 20px;
  margin: 0 1px 0 2px;
  background: #bdbdbd;
}
.second .sep {
  margin: 0 1px;
}
.sep.double {
  width: 4px;
  margin: 0 1px;
  border: solid #bdbdbd;
  border-width: 0 1px;
  background: none;
}
.sep.far {
  margin-left: 17px;
}
.finder {
  display: flex;
  height: 19px;
  margin-left: auto;
  margin-right: 1px;
  border: 1px solid #c4c4c4;
}
.finder button {
  display: flex;
  position: relative;
  align-items: center;
  justify-content: center;
  width: 19px;
  border-left: 1px solid #ccc;
  background: #e8e8e8;
}
.finder button:first-child {
  border-left: 0;
}
.finder .narrow {
  width: 13px;
  border: 0;
}
.finder .chat {
  width: 24px;
}
.finder svg {
  width: 13px;
  height: 13px;
}
.finder b {
  position: absolute;
  top: 1px;
  color: #fff;
  font-size: 9px;
}
.finder input {
  width: 83px;
  padding: 0 2px;
  border: 0;
  background: #fff;
  font: inherit;
}
.workspace {
  display: flex;
  flex: 1;
}
.side {
  display: flex;
  flex: none;
  flex-direction: column;
  width: 161px;
  border-right: 1px solid #cfcfcf;
}
.panel {
  display: flex;
  flex-direction: column;
  padding-left: 2px;
  border-top: 1px solid #bcbcbc;
}
.panel h2 {
  display: flex;
  align-items: center;
  justify-content: space-between;
  height: 12px;
  margin: 0;
  background: linear-gradient(90deg, #ccdaea, #dce6f2 93%, #f0f0f0 93%);
  color: #5c6a78;
  font-size: 9px;
  font-weight: normal;
}
.panel h2 button {
  width: 9px;
  color: #000;
  font-size: 10px;
  font-weight: bold;
  line-height: 10px;
}
.watch {
  height: 341px;
}
.list {
  display: flex;
  height: 309px;
  margin-top: 1px;
  overflow: hidden;
  border-bottom: 1px solid #222;
}
table {
  flex: none;
  align-self: flex-start;
  width: 142px;
  border-collapse: collapse;
  table-layout: fixed;
  background: #f2fdf0;
}
th {
  height: 18px;
  padding: 0 4px;
  border-right: 1px solid #ddd;
  background: #f8f8f8;
  font-size: 8px;
  font-weight: normal;
  text-align: right;
}
th:first-child {
  width: 58px;
  font-size: 9px;
  text-align: left;
}
tr {
  height: 16px;
}
tbody tr:nth-child(5n + 2),
tbody tr:nth-child(5n + 4) {
  height: 15px;
}
td {
  padding: 0 3px;
  border: 1px solid #ccd4ca;
  line-height: 11px;
  text-align: right;
  font-size: 8px;
}
td:first-child {
  color: #222;
  text-align: left;
  font-size: 9px;
}
td svg {
  width: 9px;
  height: 9px;
  margin-right: 3px;
  vertical-align: -1px;
}
.rise {
  color: #1a1ad6;
}
.fall {
  color: #dc1c1c;
}
.scroll {
  display: flex;
  flex: 1;
  flex-direction: column;
  align-items: center;
  padding-bottom: 5px;
  background: #f1f1f1;
}
.thumb {
  width: 14px;
  height: 94px;
  border: 1px solid #a5a5a5;
  border-radius: 2px;
  background:
    repeating-linear-gradient(#888 0 1px, transparent 1px 3px) center / 6px 9px no-repeat,
    linear-gradient(90deg, #f0f0f0, #c4c4c4);
}
.tri {
  width: 7px;
  height: 4px;
  margin: 6px 0;
  background: #444;
}
.tri.up {
  clip-path: polygon(50% 0, 100% 100%, 0 100%);
}
.tri.down {
  margin: auto 0 0;
  clip-path: polygon(0 0, 100% 0, 50% 100%);
}
.tabrow {
  display: flex;
  height: 17px;
  padding-left: 1px;
  color: #777;
  font-size: 8px;
}
.tabrow button {
  height: 11px;
  margin-top: 3px;
  padding: 0 8px;
  border-right: 1px solid #777;
  line-height: 11px;
}
.tabrow .active {
  height: 16px;
  margin-top: -1px;
  padding: 2px 8px 0;
  border: 1px solid #222;
  border-top-color: #fff;
  background: #fff;
  color: #111;
}
.nav {
  flex: 1;
}
.nav .tabrow {
  height: 21px;
}
.tree {
  flex: 1;
  margin: 0;
  padding: 1px 0 0 5px;
  overflow: hidden;
  border: 1px solid #999;
  border-right: 0;
  border-bottom-color: #222;
  background: #fff;
  list-style: none;
}
.tree li {
  display: flex;
  align-items: center;
  gap: 4px;
  height: 14px;
  overflow: hidden;
  white-space: nowrap;
}
.tree svg {
  width: 13px;
  height: 13px;
}
.tree .root svg {
  width: 11px;
  height: 11px;
}
.plus {
  position: relative;
  flex: none;
  width: 9px;
  height: 9px;
  margin-right: 1px;
  border: 1px solid #999;
  background:
    linear-gradient(#335, #335) center / 5px 1px no-repeat,
    linear-gradient(#335, #335) center / 1px 5px no-repeat,
    #fff;
}
.plus::after {
  position: absolute;
  top: 3px;
  left: 9px;
  width: 3px;
  border-top: 1px dotted #888;
  content: "";
}
.main {
  display: flex;
  flex: 1;
  flex-direction: column;
  min-width: 0;
  padding-left: 2px;
}
.chart {
  display: flex;
  flex: 1;
  border: solid #6a6a6a;
  border-width: 1px 2px 0 1px;
  border-right-color: #ddd;
  padding: 1px 0 0 2px;
  background: #000;
}
.plot {
  flex: 1;
  min-width: 0;
}
.axis {
  width: 33px;
}
text {
  fill: #ddd;
  font-size: 7px;
}
.title {
  font-size: 8px;
}
.wick {
  fill: #35b336;
}
.hollow {
  fill: #000;
  stroke: #35b336;
}
.solid {
  fill: #e9ffe6;
  stroke: #4fdc50;
}
polyline {
  fill: none;
  stroke-linejoin: round;
}
.slow {
  stroke: #35b336;
  stroke-width: 2;
}
.fast {
  stroke: #da1414;
  stroke-width: 2;
}
.cross {
  fill: none;
  stroke: #e81212;
  stroke-width: 2;
}
.average {
  stroke: #2d74c0;
  stroke-width: 1;
}
.rsi {
  stroke: #a0cc3e;
  stroke-width: 2;
}
.limit {
  fill: #da1414;
}
.bidline {
  stroke: #56626c;
}
.level {
  stroke: #c07c22;
  stroke-dasharray: 3 2;
}
.day {
  stroke: #ddd;
  stroke-dasharray: 3 2;
}
.edge {
  fill: none;
  stroke: #cfcfcf;
}
.split {
  stroke: #666;
  stroke-width: 2;
}
.white {
  fill: #fff;
}
.shiftmark {
  fill: #667;
}
.alert rect {
  fill: #ee0a0a;
}
.alert text {
  fill: #6c0000;
}
.bid rect {
  fill: #fff;
}
.bid text {
  fill: #000;
}
.charttabs {
  display: flex;
  align-items: flex-start;
  height: 18px;
  border-top: 1px solid #555;
  color: #777;
  font-size: 8px;
}
.charttabs button {
  height: 12px;
  margin-top: 2px;
  padding: 0 10px;
  border-right: 1px solid #888;
}
.charttabs button:first-child {
  padding-left: 11px;
}
.charttabs button:nth-child(2) {
  border: 0;
}
.charttabs .active {
  height: 16px;
  margin-top: -1px;
  padding: 1px 9px 0;
  border: 1px solid #222;
  border-top-color: #fff;
  background: #fff;
  color: #111;
}
.pager {
  display: flex;
  gap: 9px;
  margin: 5px 5px 0 auto;
}
.pager i {
  width: 3px;
  height: 5px;
  background: #888;
}
.left {
  clip-path: polygon(100% 0, 100% 100%, 0 50%);
}
.right {
  clip-path: polygon(0 0, 100% 50%, 0 100%);
}
.status {
  height: 4px;
  border-top: 2px solid #d2d2d2;
}
</style>
